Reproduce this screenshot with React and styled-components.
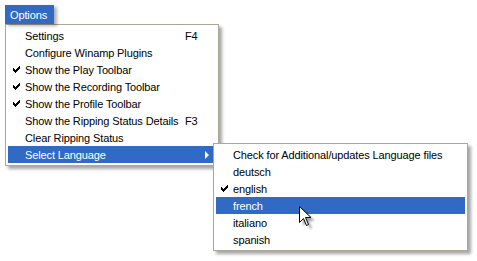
import React from "react";
import styled, { createGlobalStyle } from "styled-components";

const Global = createGlobalStyle`
  body {
    margin: 0;
    background: #ffffff;
    font-family: "Liberation Sans", Arial, sans-serif;
    font-size: 11px;
    letter-spacing: -0.12px;
  }
`;

const mainItems = [
  { label: "Settings", key: "F4" },
  { label: "Configure Winamp Plugins" },
  { label: "Show the Play Toolbar", checked: true },
  { label: "Show the Recording Toolbar", checked: true },
  { label: "Show the Profile Toolbar", checked: true },
  { label: "Show the Ripping Status Details", key: "F3" },
  { label: "Clear Ripping Status" },
  { label: "Select Language", sub: true, active: true },
];

const langItems = [
  { label: "Check for Additional/updates Language files" },
  { label: "deutsch" },
  { label: "english", checked: true },
  { label: "french", active: true, cursor: true },
  { label: "italiano" },
  { label: "spanish" },
];

function Check({ color }) {
  return (
    <svg width="7" height="7" viewBox="0 0 7 7">
      <path
        d="M0 2h1v1h1v1h1v-1h1v-1h1v-1h1v-1h1v3h-1v1h-1v1h-1v1h-1v1h-1v-1h-1v-1h-1z"
        fill={color}
      />
    </svg>
  );
}

function Cursor() {
  return (
    <svg width="16" height="24" viewBox="0 0 16 24">
      <defs>
        <filter id="blur" x="-50%" y="-50%" width="200%" height="200%">
          <feGaussianBlur stdDeviation="1" />
        </filter>
      </defs>
      <path
        d="M2.5 2.5v16l4-4 3 7 2-1-3-7h6z"
        fill="#000"
        opacity="0.35"
        filter="url(#blur)"
        transform="translate(1.5 1.5)"
      />
      <path d="M0.5 0.5v16l4-4 3 7 2-1-3-7h5.5z" fill="#fff" stroke="#000" strokeWidth="1" />
    </svg>
  );
}

export default function App() {
  return (
    <Page>
      <Global />
      <MenuButton>Options</MenuButton>
      <Menu>
        {mainItems.map((it) => (
          <Row key={it.label} $active={it.active}>
            <Gutter>{it.checked && <Check color={it.active ? "#fff" : "#000"} />}</Gutter>
            <Label>{it.label}</Label>
            <Shortcut>{it.key}</Shortcut>
            {it.sub && <Arrow />}
            {it.sub && (
              <SubMenu>
                {langItems.map((l) => (
                  <Row key={l.label} $active={l.active}>
                    <Gutter>{l.checked && <Check color="#000" />}</Gutter>
                    <Label>{l.label}</Label>
                    {l.cursor && (
                      <CursorSpot>
                        <Cursor />
                      </CursorSpot>
                    )}
                  </Row>
                ))}
              </SubMenu>
            )}
          </Row>
        ))}
      </Menu>
    </Page>
  );
}

const Page = styled.div`
  padding: 5px;
  width: 477px;
  height: 261px;
  box-sizing: border-box;
  overflow: hidden;
`;

const MenuButton = styled.div`
  width: 49px;
  height: 19px;
  background: #316ac5;
  color: #ffffff;
  display: flex;
  align-items: center;
  padding-left: 5px;
  box-sizing: border-box;
  box-shadow: 3px 2px 3px rgba(0, 0, 0, 0.3);
  position: relative;
  z-index: 1;
`;

const Menu = styled.div`
  width: 214px;
  box-sizing: border-box;
  border: 1px solid #aca899;
  background: #ffffff;
  padding: 2px;
  box-shadow: 3px 3px 3px rgba(0, 0, 0, 0.35);
  position: relative;
`;

const Row = styled.div`
  height: 17px;
  display: flex;
  align-items: center;
  position: relative;
  background: ${(p) => (p.$active ? "#316ac5" : "transparent")};
  color: ${(p) => (p.$active ? "#ffffff" : "#000000")};
  white-space: nowrap;
`;

const Gutter = styled.div`
  width: 17px;
  display: flex;
  justify-content: center;
  align-items: center;
  padding-right: 1px;
  box-sizing: border-box;
`;

const Label = styled.span`
  flex: 1;
`;

const Shortcut = styled.span`
  width: 31px;
`;

const Arrow = styled.div`
  position: absolute;
  right: 7px;
  top: 5px;
  width: 0;
  height: 0;
  border-top: 4px solid transparent;
  border-bottom: 4px solid transparent;
  border-left: 4px solid #ffffff;
`;

const SubMenu = styled.div`
  position: absolute;
  left: 205px;
  top: -3px;
  width: 255px;
  box-sizing: border-box;
  border: 1px solid #aca899;
  background: #ffffff;
  padding: 2px;
  box-shadow: 3px 3px 3px rgba(0, 0, 0, 0.35);
  z-index: 2;
`;

const CursorSpot = styled.div`
  position: absolute;
  left: 83px;
  top: 9px;
  line-height: 0;
`;
